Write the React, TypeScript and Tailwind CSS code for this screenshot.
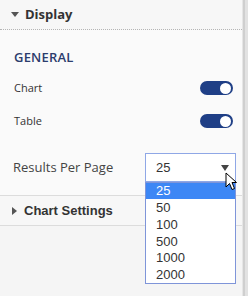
import React from 'react';

function Toggle() {
  return (
    <div className="w-[33px] h-[14px] rounded-full bg-[#1f3f86] flex items-center justify-end pr-[2px]">
      <div className="w-[11px] h-[11px] rounded-full bg-white" />
    </div>
  );
}

const options = ['25', '50', '100', '500', '1000', '2000'];

export default function App() {
  return (
    <div className="w-[248px] h-[296px] flex bg-[#f3f3f3] overflow-hidden" style={{ fontFamily: '"Open Sans", sans-serif' }}>
      <div className="w-[242px] flex flex-col">
        <div className="h-[30px] bg-[#f7f7f7] flex items-center pl-[11px] gap-[6px] border-b border-dotted border-[#b5b5b5]">
          <span className="w-0 h-0 border-l-[4px] border-r-[4px] border-t-[5px] border-l-transparent border-r-transparent border-t-[#555]" />
          <span className="text-[13px] font-bold text-[#333]">Display</span>
        </div>
        <div className="bg-[#fafafa] flex flex-col pl-[14px] pr-[6px]">
          <div className="h-[17px] mt-[19px] flex items-center text-[13px] font-semibold text-[#2c3d6d] tracking-[0.2px]">GENERAL</div>
          <div className="h-[14px] mt-[15px] flex items-center justify-between pr-[3px]">
            <span className="text-[11px] text-[#333]">Chart</span>
            <Toggle />
          </div>
          <div className="h-[14px] mt-[19px] flex items-center justify-between pr-[3px]">
            <span className="text-[11px] text-[#333]">Table</span>
            <Toggle />
          </div>
          <div className="mt-[25px] mb-[13px] flex items-center justify-between">
            <span className="text-[13px] text-[#444] -ml-[1px]">Results Per Page</span>
            <div className="relative w-[91px]">
              <div className="h-[29px] border border-[#8fa7e6] bg-white flex items-center justify-between pl-[10px] pr-[6px]" style={{ fontFamily: '"Liberation Sans", Arial, sans-serif' }}>
                <span className="text-[13px] text-[#333]">25</span>
                <span className="w-0 h-0 border-l-[4px] border-r-[4px] border-t-[6px] border-l-transparent border-r-transparent border-t-[#444]" />
              </div>
              <div className="absolute left-0 top-[29px] w-[91px] z-10 bg-white border border-[#7f95d9]" style={{ fontFamily: '"Liberation Sans", Arial, sans-serif' }}>
                {options.map((o, i) => (
                  <div
                    key={o}
                    className={i === 0 ? 'h-[16px] pl-[10px] text-[13px] leading-[16px] bg-[#3d87f5] text-white' : 'h-[16.8px] pl-[10px] text-[13px] leading-[17px] text-[#333]'}
                  >
                    {o}
                  </div>
                ))}
              </div>
              <svg className="absolute left-[80px] top-[19px] z-20" width="13" height="19" viewBox="0 0 13 19">
                <path d="M1 1 L1 15 L4.5 11.5 L7 17.5 L9.5 16.5 L7 10.5 L11.5 10.5 Z" fill="white" stroke="black" strokeWidth="1" strokeLinejoin="round" />
              </svg>
            </div>
          </div>
        </div>
        <div className="h-[31px] bg-[#f7f7f7] border-t border-b border-[#dcdcdc] flex items-center pl-[12px] gap-[7px]" style={{ fontFamily: '"Liberation Sans", Arial, sans-serif' }}>
          <span className="w-0 h-0 border-t-[4px] border-b-[4px] border-l-[5px] border-t-transparent border-b-transparent border-l-[#555]" />
          <span className="text-[13px] font-bold text-[#333]">Chart Settings</span>
        </div>
        <div className="flex-1 bg-[#f5f5f5]" />
      </div>
      <div className="w-[6px] flex">
        <div className="w-[1px] bg-[#e6e6e6]" />
        <div className="w-[2px] bg-[#cfcfcf]" />
        <div className="flex-1 bg-[#e2e2e2]" />
      </div>
    </div>
  );
}
